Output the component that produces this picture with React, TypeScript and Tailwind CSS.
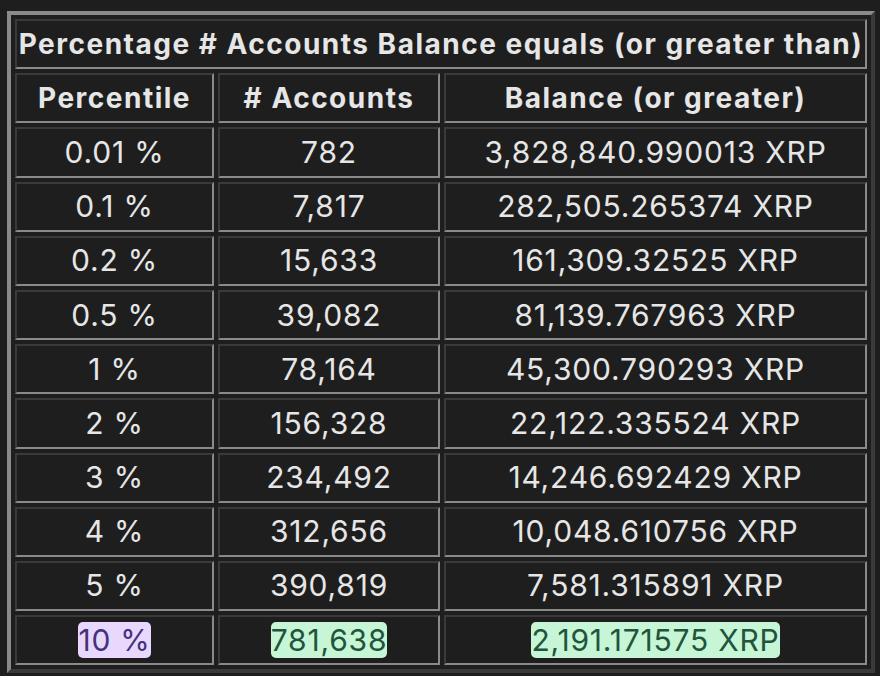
import React from 'react';

// --- Data ---
type Row = { pct: string; accounts: string; balance: string };

const ROWS: Row[] = [
  { pct: '0.01 %', accounts: '782', balance: '3,828,840.990013 XRP' },
  { pct: '0.1 %', accounts: '7,817', balance: '282,505.265374 XRP' },
  { pct: '0.2 %', accounts: '15,633', balance: '161,309.32525 XRP' },
  { pct: '0.5 %', accounts: '39,082', balance: '81,139.767963 XRP' },
  { pct: '1 %', accounts: '78,164', balance: '45,300.790293 XRP' },
  { pct: '2 %', accounts: '156,328', balance: '22,122.335524 XRP' },
  { pct: '3 %', accounts: '234,492', balance: '14,246.692429 XRP' },
  { pct: '4 %', accounts: '312,656', balance: '10,048.610756 XRP' },
  { pct: '5 %', accounts: '390,819', balance: '7,581.315891 XRP' },
];

// inset cell border: dark top/left, light bottom/right
const cell =
  'h-[50.2px] p-0 text-center align-middle whitespace-nowrap border-2 border-t-[#3a3a3a] border-l-[#3a3a3a] border-b-[#8a8a8a] border-r-[#8a8a8a]';

const head = `${cell} text-[28px] font-bold tracking-[1.5px]`;

export default function App() {
  return (
    <div className="min-h-screen bg-[#1e1e1e] pt-[11px] pl-[7px] font-['Inter','Noto_Sans',sans-serif] text-[#e6e6e6]">
      <table className="w-[868px] table-fixed border-separate border-spacing-[4px] border-4 border-t-[#8a8a8a] border-l-[#8a8a8a] border-b-[#3a3a3a] border-r-[#3a3a3a]">
        <colgroup>
          <col className="w-[199px]" />
          <col className="w-[222px]" />
          <col />
        </colgroup>
        <thead>
          <tr>
            <th colSpan={3} className={head}>
              Percentage # Accounts Balance equals (or greater than)
            </th>
          </tr>
          <tr>
            <th className={head}>Percentile</th>
            <th className={head}># Accounts</th>
            <th className={head}>Balance (or greater)</th>
          </tr>
        </thead>
        <tbody className="text-[30px] tracking-[0.8px]">
          {ROWS.map((r) => (
            <tr key={r.pct}>
              <td className={cell}>{r.pct}</td>
              <td className={cell}>{r.accounts}</td>
              <td className={cell}>{r.balance}</td>
            </tr>
          ))}
          <tr>
            <td className={cell}>
              <mark className="rounded-[5px] bg-[#e9d8fd] text-[#44337a]">10 %</mark>
            </td>
            <td className={cell}>
              <mark className="rounded-[5px] bg-[#c6f6d5] text-[#22543d]">781,638</mark>
            </td>
            <td className={cell}>
              <mark className="rounded-[5px] bg-[#c6f6d5] text-[#22543d]">2,191.171575 XRP</mark>
            </td>
          </tr>
        </tbody>
      </table>
    </div>
  );
}
